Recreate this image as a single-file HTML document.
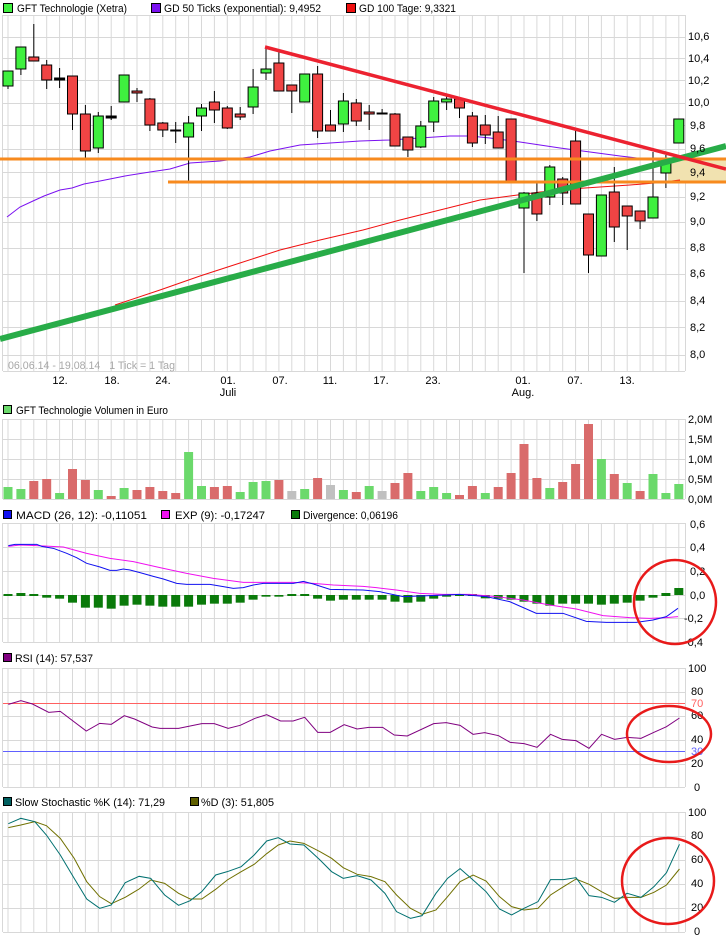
<!DOCTYPE html>
<html><head><meta charset="utf-8"><style>
html,body{margin:0;padding:0;background:#fff;width:726px;height:940px;overflow:hidden}
svg{display:block;font-family:"Liberation Sans",sans-serif}
.ax{font-size:11px;fill:#000}
.lg{font-size:11px;fill:#000}
.gl{stroke:#d8d8d8;stroke-width:1}
.cd line{stroke:#000;stroke-width:1}
.cd rect{stroke:#000;stroke-width:1}
.g{fill:#3ff03f}.r{fill:#f04444}
.vg{fill:#6bd96b}.vr{fill:#d96b6b}.vy{fill:#c0c0c0}
</style></head><body>
<svg width="726" height="940" viewBox="0 0 726 940">
<defs>
<pattern id="vgp" x="7.5" y="0" width="12.9" height="1000" patternUnits="userSpaceOnUse"><rect width="1" height="1000" fill="#d8d8d8"/></pattern>
</defs>

<!-- ===== MAIN CHART ===== -->
<rect x="3" y="15" width="682" height="356" fill="url(#vgp)"/>
<g class="gl">
<line x1="3" y1="15.5" x2="685" y2="15.5"/>
<line x1="3" y1="37.5" x2="685" y2="37.5"/>
<line x1="3" y1="58.5" x2="685" y2="58.5"/>
<line x1="3" y1="80.5" x2="685" y2="80.5"/>
<line x1="3" y1="103.5" x2="685" y2="103.5"/>
<line x1="3" y1="125.5" x2="685" y2="125.5"/>
<line x1="3" y1="149.5" x2="685" y2="149.5"/>
<line x1="3" y1="172.5" x2="685" y2="172.5"/>
<line x1="3" y1="197.5" x2="685" y2="197.5"/>
<line x1="3" y1="222.5" x2="685" y2="222.5"/>
<line x1="3" y1="248.5" x2="685" y2="248.5"/>
<line x1="3" y1="274.5" x2="685" y2="274.5"/>
<line x1="3" y1="301.5" x2="685" y2="301.5"/>
<line x1="3" y1="327.5" x2="685" y2="327.5"/>
<line x1="3" y1="355.5" x2="685" y2="355.5"/>
<line x1="3" y1="371.5" x2="685" y2="371.5"/>
<line x1="2.5" y1="15" x2="2.5" y2="371"/>
<line x1="685.5" y1="15" x2="685.5" y2="371"/>
</g>
<polygon points="668,160 726,160 726,181 668,181" fill="#f1e2b0"/>
<polyline fill="none" stroke="#7a10f0" stroke-width="1" points="7,217 20,207 33,201 44,196 60,190 72,188 84,184 100,181 125,176 150,172 170,169 190,163 220,161 250,157 270,151 300,145 330,143 360,141 390,140 420,138 450,136 470,136 490,138 520,142 540,145 560,148 590,152 620,156 645,159 665,161"/>
<polyline fill="none" stroke="#f01010" stroke-width="1" points="115,305 160,290 200,276 240,263 280,250 320,240 363,230 400,220 440,210 480,200 510,196 540,192 570,189 600,187 630,185 655,183 680,180"/>
<g class="cd">
<line x1="8" y1="71" x2="8" y2="89"/><rect class="g" x="3" y="71" width="10" height="15"/>
<line x1="20.9" y1="47" x2="20.9" y2="75"/><rect class="g" x="15.9" y="47" width="10" height="22"/>
<line x1="33.8" y1="24" x2="33.8" y2="61"/><rect class="r" x="28.8" y="57" width="10" height="4"/>
<line x1="46.7" y1="60" x2="46.7" y2="89"/><rect class="r" x="41.7" y="65" width="10" height="15"/>
<line x1="59.6" y1="68" x2="59.6" y2="88"/><rect fill="#000" x="54.6" y="78" width="10" height="2" stroke="none"/>
<line x1="72.5" y1="76" x2="72.5" y2="130"/><rect class="r" x="67.5" y="76" width="10" height="38"/>
<line x1="85.4" y1="105" x2="85.4" y2="158"/><rect class="r" x="80.4" y="114" width="10" height="37"/>
<line x1="98.3" y1="112" x2="98.3" y2="153"/><rect class="g" x="93.3" y="116" width="10" height="32"/>
<line x1="111.2" y1="106" x2="111.2" y2="120"/><rect fill="#000" x="106.2" y="116" width="10" height="2" stroke="none"/>
<line x1="124.1" y1="75" x2="124.1" y2="102"/><rect class="g" x="119.1" y="75" width="10" height="27"/>
<line x1="137" y1="88" x2="137" y2="102"/><rect class="r" x="132" y="91" width="10" height="2"/>
<line x1="149.9" y1="98" x2="149.9" y2="131"/><rect class="r" x="144.9" y="99" width="10" height="26"/>
<line x1="162.8" y1="122" x2="162.8" y2="137"/><rect class="r" x="157.8" y="123" width="10" height="7"/>
<line x1="175.7" y1="122" x2="175.7" y2="143"/><rect fill="#000" x="170.7" y="130" width="10" height="1" stroke="none"/>
<line x1="188.6" y1="116" x2="188.6" y2="182"/><rect class="g" x="183.6" y="123" width="10" height="14"/>
<line x1="201.5" y1="104" x2="201.5" y2="131"/><rect class="g" x="196.5" y="108" width="10" height="8"/>
<line x1="214.4" y1="91" x2="214.4" y2="123"/><rect class="r" x="209.4" y="102" width="10" height="8"/>
<line x1="227.3" y1="106" x2="227.3" y2="129"/><rect class="r" x="222.3" y="108" width="10" height="20"/>
<line x1="240.2" y1="107" x2="240.2" y2="120"/><rect class="r" x="235.2" y="114" width="10" height="3"/>
<line x1="253.1" y1="69" x2="253.1" y2="114"/><rect class="g" x="248.1" y="87" width="10" height="20"/>
<line x1="266" y1="47" x2="266" y2="80"/><rect class="g" x="261" y="69" width="10" height="4"/>
<line x1="278.9" y1="50" x2="278.9" y2="91"/><rect class="r" x="273.9" y="63" width="10" height="28"/>
<line x1="291.8" y1="85" x2="291.8" y2="113"/><rect class="r" x="286.8" y="85" width="10" height="6"/>
<line x1="304.7" y1="74" x2="304.7" y2="102"/><rect class="g" x="299.7" y="74" width="10" height="28"/>
<line x1="317.6" y1="66" x2="317.6" y2="138"/><rect class="r" x="312.6" y="74" width="10" height="57"/>
<line x1="330.5" y1="110" x2="330.5" y2="131"/><rect class="r" x="325.5" y="125" width="10" height="6"/>
<line x1="343.4" y1="93" x2="343.4" y2="132"/><rect class="g" x="338.4" y="101" width="10" height="23"/>
<line x1="356.3" y1="99" x2="356.3" y2="126"/><rect class="r" x="351.3" y="103" width="10" height="18"/>
<line x1="369.2" y1="105" x2="369.2" y2="130"/><rect class="r" x="364.2" y="112" width="10" height="2"/>
<line x1="382.1" y1="109" x2="382.1" y2="114"/><rect fill="#000" x="377.1" y="113" width="10" height="1" stroke="none"/>
<line x1="395" y1="113" x2="395" y2="146"/><rect class="r" x="390" y="114" width="10" height="32"/>
<line x1="407.9" y1="137" x2="407.9" y2="157"/><rect class="r" x="402.9" y="137" width="10" height="13"/>
<line x1="420.8" y1="121" x2="420.8" y2="148"/><rect class="g" x="415.8" y="126" width="10" height="21"/>
<line x1="433.7" y1="97" x2="433.7" y2="132"/><rect class="g" x="428.7" y="101" width="10" height="21"/>
<line x1="446.6" y1="96" x2="446.6" y2="110"/><rect class="g" x="441.6" y="99" width="10" height="3"/>
<line x1="459.5" y1="99" x2="459.5" y2="118"/><rect class="r" x="454.5" y="99" width="10" height="9"/>
<line x1="472.4" y1="112" x2="472.4" y2="147"/><rect class="r" x="467.4" y="116" width="10" height="27"/>
<line x1="485.3" y1="115" x2="485.3" y2="144"/><rect class="r" x="480.3" y="125" width="10" height="10"/>
<line x1="498.2" y1="116" x2="498.2" y2="148"/><rect class="r" x="493.2" y="132" width="10" height="16"/>
<line x1="511.1" y1="119" x2="511.1" y2="181"/><rect class="r" x="506.1" y="119" width="10" height="62"/>
<line x1="524" y1="192" x2="524" y2="273"/><rect class="g" x="519" y="193" width="10" height="15"/>
<line x1="536.9" y1="183" x2="536.9" y2="221"/><rect class="r" x="531.9" y="193" width="10" height="21"/>
<line x1="549.8" y1="165" x2="549.8" y2="205"/><rect class="g" x="544.8" y="167" width="10" height="30"/>
<line x1="562.7" y1="177" x2="562.7" y2="205"/><rect class="r" x="557.7" y="179" width="10" height="14"/>
<line x1="575.6" y1="128" x2="575.6" y2="204"/><rect class="r" x="570.6" y="141" width="10" height="63"/>
<line x1="588.5" y1="214" x2="588.5" y2="273"/><rect class="r" x="583.5" y="214" width="10" height="41"/>
<line x1="601.4" y1="195" x2="601.4" y2="256"/><rect class="g" x="596.4" y="195" width="10" height="61"/>
<line x1="614.3" y1="167" x2="614.3" y2="242"/><rect class="r" x="609.3" y="192" width="10" height="35"/>
<line x1="627.2" y1="206" x2="627.2" y2="250"/><rect class="r" x="622.2" y="206" width="10" height="10"/>
<line x1="640.1" y1="211" x2="640.1" y2="229"/><rect class="r" x="635.1" y="211" width="10" height="10"/>
<line x1="653" y1="152" x2="653" y2="218"/><rect class="g" x="648" y="197" width="10" height="21"/>
<line x1="665.9" y1="155" x2="665.9" y2="188"/><rect class="g" x="660.9" y="160" width="10" height="13"/>
<line x1="678.8" y1="119" x2="678.8" y2="143"/><rect class="g" x="673.8" y="119" width="10" height="24"/>
</g>
<line x1="0" y1="159" x2="726" y2="159" stroke="#f78a1e" stroke-width="3"/>
<line x1="168" y1="182" x2="726" y2="182" stroke="#f78a1e" stroke-width="3"/>
<line x1="0" y1="339" x2="726" y2="146" stroke="#28ac48" stroke-width="6"/>
<line x1="265" y1="47" x2="726" y2="169" stroke="#ec2230" stroke-width="3.5"/>
<g class="ax" dominant-baseline="middle">
<text x="688" y="37">10,6</text><text x="688" y="59">10,4</text><text x="688" y="81">10,2</text><text x="688" y="103">10,0</text>
<text x="690" y="126">9,8</text><text x="690" y="149">9,6</text><text x="690" y="173">9,4</text><text x="690" y="197">9,2</text>
<text x="690" y="222">9,0</text><text x="690" y="248">8,8</text><text x="690" y="274">8,6</text><text x="690" y="301">8,4</text>
<text x="690" y="328">8,2</text><text x="690" y="355">8,0</text>
</g>
<text x="8" y="369" font-size="11" fill="#a8a8a8" xml:space="preserve" textLength="167" lengthAdjust="spacingAndGlyphs">06.06.14 - 19.08.14   1 Tick = 1 Tag</text>
<g class="ax" text-anchor="middle">
<text x="60" y="384">12.</text><text x="112" y="384">18.</text><text x="163" y="384">24.</text>
<text x="228" y="384">01.</text><text x="228" y="396">Juli</text>
<text x="280" y="384">07.</text><text x="330" y="384">11.</text><text x="381" y="384">17.</text><text x="433" y="384">23.</text>
<text x="523" y="384">01.</text><text x="523" y="396">Aug.</text>
<text x="575" y="384">07.</text><text x="627" y="384">13.</text>
</g>

<rect x="3.5" y="3.5" width="9" height="9" fill="#3ff03f" stroke="#000"/>
<text class="lg" x="17" y="12" textLength="110" lengthAdjust="spacingAndGlyphs">GFT Technologie (Xetra)</text>
<rect x="151.5" y="3.5" width="9" height="9" fill="#7a10f0" stroke="#000"/>
<text class="lg" x="164" y="12" textLength="157" lengthAdjust="spacingAndGlyphs">GD 50 Ticks (exponential): 9,4952</text>
<rect x="346.5" y="3.5" width="9" height="9" fill="#f01010" stroke="#000"/>
<text class="lg" x="359" y="12" textLength="97" lengthAdjust="spacingAndGlyphs">GD 100 Tage: 9,3321</text>

<!-- ===== VOLUME ===== -->
<rect x="3.5" y="405.5" width="8" height="8" fill="#6bd96b" stroke="#000"/>
<text class="lg" x="16" y="414" textLength="152" lengthAdjust="spacingAndGlyphs">GFT Technologie Volumen in Euro</text>
<rect x="3" y="419" width="682" height="80" fill="url(#vgp)"/>
<g class="gl">
<line x1="3" y1="419.5" x2="685" y2="419.5"/><line x1="3" y1="439.5" x2="685" y2="439.5"/>
<line x1="3" y1="459.5" x2="685" y2="459.5"/><line x1="3" y1="479.5" x2="685" y2="479.5"/>
<line x1="3" y1="499.5" x2="685" y2="499.5"/>
<line x1="2.5" y1="419" x2="2.5" y2="499"/><line x1="685.5" y1="419" x2="685.5" y2="499"/>
</g>
<g>
<rect class="vg" x="3.5" y="487" width="9" height="12"/>
<rect class="vg" x="16.4" y="489" width="9" height="10"/>
<rect class="vr" x="29.3" y="481" width="9" height="18"/>
<rect class="vr" x="42.2" y="479" width="9" height="20"/>
<rect class="vg" x="55.1" y="493" width="9" height="6"/>
<rect class="vr" x="68" y="469" width="9" height="30"/>
<rect class="vr" x="80.9" y="480" width="9" height="19"/>
<rect class="vg" x="93.8" y="490" width="9" height="9"/>
<rect class="vr" x="106.7" y="496" width="9" height="3"/>
<rect class="vg" x="119.6" y="488" width="9" height="11"/>
<rect class="vr" x="132.5" y="490" width="9" height="9"/>
<rect class="vr" x="145.4" y="487" width="9" height="12"/>
<rect class="vr" x="158.3" y="491" width="9" height="8"/>
<rect class="vr" x="171.2" y="493" width="9" height="6"/>
<rect class="vg" x="184.1" y="452" width="9" height="47"/>
<rect class="vg" x="197" y="486" width="9" height="13"/>
<rect class="vr" x="209.9" y="487" width="9" height="12"/>
<rect class="vr" x="222.8" y="486" width="9" height="13"/>
<rect class="vg" x="235.7" y="492" width="9" height="7"/>
<rect class="vg" x="248.6" y="482" width="9" height="17"/>
<rect class="vg" x="261.5" y="481" width="9" height="18"/>
<rect class="vr" x="274.4" y="480" width="9" height="19"/>
<rect class="vy" x="287.3" y="491" width="9" height="8"/>
<rect class="vg" x="300.2" y="489" width="9" height="10"/>
<rect class="vr" x="313.1" y="478" width="9" height="21"/>
<rect class="vy" x="326" y="485" width="9" height="14"/>
<rect class="vg" x="338.9" y="490" width="9" height="9"/>
<rect class="vr" x="351.8" y="492" width="9" height="7"/>
<rect class="vg" x="364.7" y="486" width="9" height="13"/>
<rect class="vy" x="377.6" y="491" width="9" height="8"/>
<rect class="vr" x="390.5" y="483" width="9" height="16"/>
<rect class="vr" x="403.4" y="473" width="9" height="26"/>
<rect class="vg" x="416.3" y="491" width="9" height="8"/>
<rect class="vg" x="429.2" y="487" width="9" height="12"/>
<rect class="vg" x="442.1" y="493" width="9" height="6"/>
<rect class="vr" x="455" y="495" width="9" height="4"/>
<rect class="vr" x="467.9" y="486" width="9" height="13"/>
<rect class="vg" x="480.8" y="493" width="9" height="6"/>
<rect class="vr" x="493.7" y="487" width="9" height="12"/>
<rect class="vr" x="506.6" y="473" width="9" height="26"/>
<rect class="vr" x="519.5" y="444" width="9" height="55"/>
<rect class="vr" x="532.4" y="478" width="9" height="21"/>
<rect class="vg" x="545.3" y="488" width="9" height="11"/>
<rect class="vr" x="558.2" y="482" width="9" height="17"/>
<rect class="vr" x="571.1" y="464" width="9" height="35"/>
<rect class="vr" x="584" y="424" width="9" height="75"/>
<rect class="vg" x="596.9" y="459" width="9" height="40"/>
<rect class="vr" x="609.8" y="474" width="9" height="25"/>
<rect class="vg" x="622.7" y="483" width="9" height="16"/>
<rect class="vr" x="635.6" y="491" width="9" height="8"/>
<rect class="vg" x="648.5" y="474" width="9" height="25"/>
<rect class="vg" x="661.4" y="493" width="9" height="6"/>
<rect class="vg" x="674.3" y="484" width="9" height="15"/>
</g>
<g class="ax" dominant-baseline="middle">
<text x="688" y="420">2,0M</text><text x="688" y="440">1,5M</text><text x="688" y="460">1,0M</text>
<text x="688" y="480">0,5M</text><text x="688" y="500">0,0M</text>
</g>

<!-- ===== MACD ===== -->
<rect x="3.5" y="510.5" width="8" height="8" fill="#1010f0" stroke="#000"/>
<text class="lg" x="16" y="519" textLength="131" lengthAdjust="spacingAndGlyphs">MACD (26, 12): -0,11051</text>
<rect x="161.5" y="510.5" width="8" height="8" fill="#f010f0" stroke="#000"/>
<text class="lg" x="175" y="519" textLength="90" lengthAdjust="spacingAndGlyphs">EXP (9): -0,17247</text>
<rect x="291.5" y="510.5" width="8" height="8" fill="#0a7a0a" stroke="#000"/>
<text class="lg" x="303" y="519" textLength="95" lengthAdjust="spacingAndGlyphs">Divergence: 0,06196</text>
<rect x="3" y="523" width="682" height="119" fill="url(#vgp)"/>
<g class="gl">
<line x1="3" y1="523.5" x2="685" y2="523.5"/><line x1="3" y1="547.5" x2="685" y2="547.5"/>
<line x1="3" y1="571.5" x2="685" y2="571.5"/><line x1="3" y1="595.5" x2="685" y2="595.5"/>
<line x1="3" y1="618.5" x2="685" y2="618.5"/><line x1="3" y1="642.5" x2="685" y2="642.5"/>
<line x1="2.5" y1="523" x2="2.5" y2="642"/><line x1="685.5" y1="523" x2="685.5" y2="642"/>
</g>
<g transform="translate(0,505) scale(1,0.33333)" fill="#0a7a0a">
<rect x="3.5" y="267" width="9" height="6"/><rect x="16.4" y="264" width="9" height="9"/><rect x="29.3" y="267" width="9" height="6"/>
<rect x="42.2" y="270" width="9" height="8"/><rect x="55.1" y="270" width="9" height="11"/><rect x="68" y="270" width="9" height="23"/>
<rect x="80.9" y="270" width="9" height="38"/><rect x="93.8" y="270" width="9" height="38"/><rect x="106.7" y="270" width="9" height="41"/>
<rect x="119.6" y="270" width="9" height="32"/><rect x="132.5" y="270" width="9" height="29"/><rect x="145.4" y="270" width="9" height="32"/>
<rect x="158.3" y="270" width="9" height="35"/><rect x="171.2" y="270" width="9" height="35"/><rect x="184.1" y="270" width="9" height="35"/>
<rect x="197" y="270" width="9" height="29"/><rect x="209.9" y="270" width="9" height="26"/><rect x="222.8" y="270" width="9" height="26"/>
<rect x="235.7" y="270" width="9" height="23"/><rect x="248.6" y="270" width="9" height="14"/><rect x="261.5" y="270" width="9" height="5"/>
<rect x="274.4" y="270" width="9" height="5"/><rect x="287.3" y="267" width="9" height="6"/><rect x="300.2" y="267" width="9" height="6"/>
<rect x="313.1" y="270" width="9" height="11"/><rect x="326" y="270" width="9" height="17"/><rect x="338.9" y="270" width="9" height="14"/>
<rect x="351.8" y="270" width="9" height="14"/><rect x="364.7" y="270" width="9" height="14"/><rect x="377.6" y="270" width="9" height="14"/>
<rect x="390.5" y="270" width="9" height="20"/><rect x="403.4" y="270" width="9" height="23"/><rect x="416.3" y="270" width="9" height="20"/>
<rect x="429.2" y="270" width="9" height="11"/><rect x="442.1" y="270" width="9" height="5"/><rect x="455" y="267" width="9" height="6"/>
<rect x="467.9" y="267" width="9" height="6"/><rect x="480.8" y="270" width="9" height="10"/><rect x="493.7" y="270" width="9" height="11"/>
<rect x="506.6" y="270" width="9" height="14"/><rect x="519.5" y="270" width="9" height="20"/><rect x="532.4" y="270" width="9" height="26"/>
<rect x="545.3" y="270" width="9" height="32"/><rect x="558.2" y="270" width="9" height="26"/><rect x="571.1" y="270" width="9" height="26"/>
<rect x="584" y="270" width="9" height="26"/><rect x="596.9" y="270" width="9" height="29"/><rect x="609.8" y="270" width="9" height="26"/>
<rect x="622.7" y="270" width="9" height="23"/><rect x="635.6" y="270" width="9" height="17"/><rect x="648.5" y="270" width="9" height="8"/>
<rect x="661.4" y="264" width="9" height="9"/><rect x="674.3" y="249" width="9" height="21"/>
</g>
<g transform="translate(0,505) scale(0.33333)" fill="none" stroke-width="1">
<polyline vector-effect="non-scaling-stroke" stroke="#f010f0" points="25,124 60,120 110,122 190,126 260,145 330,160 400,170 480,188 560,205 640,220 730,232 880,232 940,235 1000,240 1089,244 1129,248 1189,255 1259,265 1329,268 1409,268 1489,275 1569,285 1649,300 1729,312 1809,332 1889,338 1949,340 1999,338 2034,335"/>
<polyline vector-effect="non-scaling-stroke" stroke="#1010f0" points="25,122 45,118 110,118 125,124 160,130 200,145 230,158 260,175 300,186 330,196 350,196 370,192 390,195 420,203 460,214 490,222 530,235 560,238 630,238 670,245 700,250 730,248 760,240 790,235 880,235 910,229 940,237 990,253 1089,255 1139,260 1209,275 1289,272 1379,268 1459,275 1529,290 1609,325 1689,325 1759,349 1819,352 1909,352 1959,345 1999,335 2034,310"/>
</g>
<g class="ax" dominant-baseline="middle">
<text x="690" y="525">0,6</text><text x="690" y="548">0,4</text><text x="690" y="572">0,2</text>
<text x="690" y="596">0,0</text><text x="684" y="619">-0,2</text><text x="684" y="643">-0,4</text>
</g>
<ellipse cx="675" cy="602" rx="41" ry="42" fill="none" stroke="#e81a1a" stroke-width="2.5"/>

<!-- ===== RSI ===== -->
<rect x="3.5" y="653.5" width="8" height="8" fill="#800080" stroke="#000"/>
<text class="lg" x="15" y="662" textLength="78" lengthAdjust="spacingAndGlyphs">RSI (14): 57,537</text>
<rect x="3" y="668" width="682" height="119" fill="url(#vgp)"/>
<g class="gl">
<line x1="3" y1="668.5" x2="685" y2="668.5"/><line x1="3" y1="692.5" x2="685" y2="692.5"/>
<line x1="3" y1="716.5" x2="685" y2="716.5"/><line x1="3" y1="740.5" x2="685" y2="740.5"/>
<line x1="3" y1="764.5" x2="685" y2="764.5"/><line x1="3" y1="787.5" x2="685" y2="787.5"/>
<line x1="2.5" y1="668" x2="2.5" y2="787"/><line x1="685.5" y1="668" x2="685.5" y2="787"/>
</g>
<line x1="3" y1="703.5" x2="685" y2="703.5" stroke="#ff6060" stroke-width="1"/>
<line x1="3" y1="751.5" x2="685" y2="751.5" stroke="#6060ff" stroke-width="1"/>
<g transform="translate(0,645) scale(0.4638,0.33333)" fill="none">
<polyline vector-effect="non-scaling-stroke" stroke="#800080" stroke-width="1" points="18,178 45,167 70,177 105,202 130,199 186,258 215,235 240,238 268,212 290,222 328,246 345,250 385,250 435,236 462,236 492,250 518,241 550,220 575,209 605,228 632,228 657,217 685,262 712,262 742,239 770,252 795,247 825,247 850,270 878,273 935,236 962,233 992,241 1020,268 1045,263 1075,272 1100,292 1130,296 1158,307 1187,268 1212,283 1242,287 1270,310 1297,268 1325,283 1352,277 1382,280 1410,262 1437,245 1465,219"/>
</g>
<g class="ax" dominant-baseline="middle">
<text x="688" y="669">100</text><text x="691" y="692">80</text><text x="691" y="704" fill="#ff6060">70</text>
<text x="691" y="716">60</text><text x="691" y="740">40</text><text x="691" y="752" fill="#6060ff">30</text>
<text x="691" y="764">20</text><text x="694" y="788">0</text>
</g>
<ellipse cx="669" cy="734" rx="42" ry="28" fill="none" stroke="#e81a1a" stroke-width="2.5"/>

<!-- ===== STOCHASTIC ===== -->
<rect x="3.5" y="797.5" width="8" height="8" fill="#006060" stroke="#000"/>
<text class="lg" x="15" y="806" textLength="150" lengthAdjust="spacingAndGlyphs">Slow Stochastic %K (14): 71,29</text>
<rect x="190.5" y="797.5" width="8" height="8" fill="#606000" stroke="#000"/>
<text class="lg" x="201" y="806" textLength="73" lengthAdjust="spacingAndGlyphs">%D (3): 51,805</text>
<rect x="3" y="812" width="682" height="120" fill="url(#vgp)"/>
<g class="gl">
<line x1="3" y1="812.5" x2="685" y2="812.5"/><line x1="3" y1="836.5" x2="685" y2="836.5"/>
<line x1="3" y1="860.5" x2="685" y2="860.5"/><line x1="3" y1="884.5" x2="685" y2="884.5"/>
<line x1="3" y1="908.5" x2="685" y2="908.5"/><line x1="3" y1="932.5" x2="685" y2="932.5"/>
<line x1="2.5" y1="812" x2="2.5" y2="932"/><line x1="685.5" y1="812" x2="685.5" y2="932"/>
</g>
<g transform="translate(0,645) scale(0.4638,0.33333)" fill="none" stroke-width="1">
<polyline vector-effect="non-scaling-stroke" stroke="#707000" points="18,548 45,540 75,530 100,542 130,580 160,640 187,710 215,755 240,776 270,757 300,732 325,705 355,715 385,745 410,762 435,762 465,733 490,705 520,680 548,658 575,626 600,600 625,588 655,595 690,620 715,640 740,668 770,688 800,695 830,710 855,750 885,790 910,808 940,795 965,755 992,710 1020,690 1048,708 1077,755 1103,785 1130,795 1160,790 1187,750 1215,725 1242,702 1270,718 1297,740 1325,760 1352,757 1382,757 1410,742 1437,720 1465,672"/>
<polyline vector-effect="non-scaling-stroke" stroke="#007070" points="18,536 45,520 75,530 100,570 130,630 160,700 187,762 215,790 240,780 270,713 300,694 325,700 355,750 385,781 410,767 435,740 465,690 490,680 520,665 548,630 575,588 600,578 625,597 655,600 690,645 715,680 740,700 770,692 800,705 830,745 855,800 885,820 910,812 940,745 965,700 992,671 1020,705 1048,740 1077,792 1103,810 1130,790 1160,770 1187,704 1215,704 1242,698 1270,752 1297,757 1325,772 1352,745 1382,757 1410,725 1437,683 1465,598"/>
</g>
<g class="ax" dominant-baseline="middle">
<text x="688" y="813">100</text><text x="691" y="836">80</text><text x="691" y="860">60</text>
<text x="691" y="884">40</text><text x="691" y="908">20</text><text x="694" y="932">0</text>
</g>
<ellipse cx="668" cy="881" rx="46" ry="43" fill="none" stroke="#e81a1a" stroke-width="2.5"/>
</svg>
</body></html>
